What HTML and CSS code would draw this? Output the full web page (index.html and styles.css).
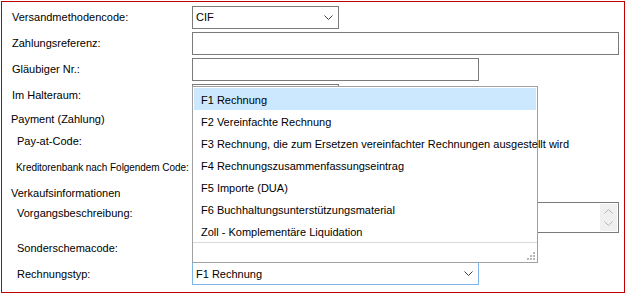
FILE: index.html
```html
<!DOCTYPE html>
<html lang="de">
<head>
  <meta charset="UTF-8" />
  <title>Rechnungsdaten</title>
  <link rel="stylesheet" href="styles.css">
</head>
<body>

  <!-- Formular -->
  <div class="frame">
    <div class="row">
      <span class="label">Versandmethodencode:</span>
      <div class="combo w-short">
        <span>CIF</span>
        <svg class="chevron" width="9" height="5" viewBox="0 0 9 5"><polyline points="0.5,0.5 4.5,4.5 8.5,0.5" /></svg>
      </div>
    </div>
    <div class="row">
      <span class="label">Zahlungsreferenz:</span>
      <div class="field w-long"></div>
    </div>
    <div class="row">
      <span class="label">Gläubiger Nr.:</span>
      <div class="field w-mid"></div>
    </div>
    <div class="row">
      <span class="label">Im Halteraum:</span>
      <div class="combo w-short"></div>
    </div>
    <div class="row heading">
      <span class="label">Payment (Zahlung)</span>
    </div>
    <div class="row small">
      <span class="label sub">Pay-at-Code:</span>
    </div>
    <div class="row tall">
      <span class="label sub tiny">Kreditorenbank nach Folgendem Code:</span>
    </div>
    <div class="row section">
      <span class="label">Verkaufsinformationen</span>
    </div>
    <div class="row area-row">
      <span class="label sub">Vorgangsbeschreibung:</span>
      <div class="area w-long">
        <div class="spin">
          <svg width="9" height="5" viewBox="0 0 9 5"><polyline points="0.5,4.5 4.5,0.5 8.5,4.5" /></svg>
          <svg width="9" height="5" viewBox="0 0 9 5"><polyline points="0.5,0.5 4.5,4.5 8.5,0.5" /></svg>
        </div>
      </div>
    </div>
    <div class="row mid">
      <span class="label sub">Sonderschemacode:</span>
    </div>
    <div class="row last">
      <span class="label sub">Rechnungstyp:</span>
      <div class="combo w-mid focused">
        <span>F1 Rechnung</span>
        <svg class="chevron" width="9" height="5" viewBox="0 0 9 5"><polyline points="0.5,0.5 4.5,4.5 8.5,0.5" /></svg>
      </div>
    </div>

    <!-- offene Auswahlliste -->
    <div class="popup">
      <div class="item selected">F1 Rechnung</div>
      <div class="item">F2 Vereinfachte Rechnung</div>
      <div class="item">F3 Rechnung, die zum Ersetzen vereinfachter Rechnungen ausgestellt wird</div>
      <div class="item">F4 Rechnungszusammenfassungseintrag</div>
      <div class="item">F5 Importe (DUA)</div>
      <div class="item">F6 Buchhaltungsunterstützungsmaterial</div>
      <div class="item">Zoll - Komplementäre Liquidation</div>
      <div class="grip-bar">
        <svg width="8" height="8" viewBox="0 0 8 8">
          <rect x="6" y="0" width="2" height="2" />
          <rect x="3" y="3" width="2" height="2" />
          <rect x="6" y="3" width="2" height="2" />
          <rect x="0" y="6" width="2" height="2" />
          <rect x="3" y="6" width="2" height="2" />
          <rect x="6" y="6" width="2" height="2" />
        </svg>
      </div>
    </div>
  </div>

</body>
</html>
```

FILE: styles.css
```css
/* Grundlayout */
body {
  margin: 0;
  background: #fff;
  font-family: 'Liberation Sans', Arial, sans-serif;
  font-size: 11px;
  color: #000;
}

.frame {
  position: relative;
  margin: 1px 0 0 1px;
  width: 624px;
  height: 292px;
  box-sizing: border-box;
  border: 1px solid #c00000;
  padding-top: 2px;
  display: flex;
  flex-direction: column;
}

/* Zeilen */
.row {
  display: flex;
  align-items: center;
  height: 26px;
  flex-shrink: 0;
}

.row.heading,
.row.small { height: 22px; }
.row.tall { height: 32px; }
.row.section { height: 18px; }
.row.mid { height: 29px; }
.row.last { height: 23px; }

.row.area-row {
  height: 31px;
  align-items: flex-start;
}

.row.area-row .label { padding-top: 4px; }

.label {
  width: 190px;
  flex-shrink: 0;
  box-sizing: border-box;
  padding-left: 10px;
  line-height: 14px;
  white-space: nowrap;
}

.heading .label,
.section .label { padding-left: 9px; }

.label.sub { padding-left: 15px; }

.label.tiny {
  padding-left: 14px;
  font-size: 10px;
  letter-spacing: -0.05px;
}

/* Eingabefelder */
.field,
.combo,
.area {
  box-sizing: border-box;
  border: 1px solid #7a7a7a;
  background: #fff;
}

.field,
.combo { height: 23px; }

.combo {
  display: flex;
  align-items: center;
  justify-content: space-between;
  padding: 0 4px 0 3px;
}

.combo.focused { border-color: #7eb4ea; }

.chevron { margin-right: 1px; }

.chevron polyline,
.spin polyline {
  fill: none;
  stroke: #404040;
  stroke-width: 1;
}

.w-short { width: 147px; }
.w-mid { width: 287px; }
.w-long { width: 427px; }

.area {
  height: 31px;
  display: flex;
  justify-content: flex-end;
  padding: 1px;
}

.spin {
  width: 17px;
  background: #f0f0f0;
  display: flex;
  flex-direction: column;
  align-items: center;
  justify-content: center;
  gap: 7px;
}

.spin polyline { stroke: #b4b4b4; }

/* Auswahlliste */
.popup {
  position: absolute;
  left: 190px;
  top: 84px;
  width: 346px;
  height: 177px;
  box-sizing: border-box;
  border: 1px solid #a0a0a0;
  background: #fff;
  padding-top: 1px;
  display: flex;
  flex-direction: column;
}

.item {
  height: 22px;
  line-height: 24px;
  padding-left: 7px;
  margin: 0 1px;
  white-space: nowrap;
  flex-shrink: 0;
}

.item.selected { background: #cce8ff; }

.grip-bar {
  margin-top: auto;
  height: 20px;
  border-top: 1px solid #d9d9d9;
  display: flex;
  justify-content: flex-end;
  align-items: flex-end;
  padding: 0 2px 2px 0;
}

.grip-bar rect { fill: #b8b8b8; }
```
